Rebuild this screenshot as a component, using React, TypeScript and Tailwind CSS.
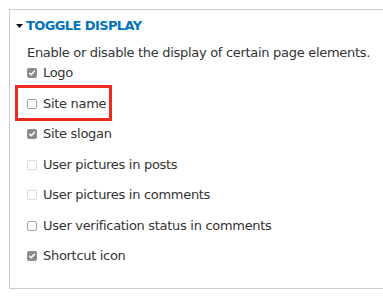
import React from 'react';

// Display toggles shown in the fieldset
const toggles = [
  { id: 'logo', label: 'Logo', checked: true },
  { id: 'name', label: 'Site name', checked: false, highlight: true },
  { id: 'slogan', label: 'Site slogan', checked: true },
  { id: 'posts', label: 'User pictures in posts', checked: false, disabled: true },
  { id: 'comments', label: 'User pictures in comments', checked: false, disabled: true },
  { id: 'verify', label: 'User verification status in comments', checked: false },
  { id: 'shortcut', label: 'Shortcut icon', checked: true },
];

type Toggle = (typeof toggles)[number] & { highlight?: boolean; disabled?: boolean };

const Box = ({ checked, disabled }: { checked: boolean; disabled?: boolean }) => {
  if (checked) {
    return (
      <span className="flex h-[10px] w-[10px] items-center justify-center rounded-[2px] bg-[#8c8c8c]">
        <svg width="8" height="8" viewBox="0 0 8 8">
          <path d="M1.6 4.2 L3.2 5.8 L6.4 2.2" fill="none" stroke="#fff" strokeWidth="1.4" strokeLinecap="round" strokeLinejoin="round" />
        </svg>
      </span>
    );
  }
  return (
    <span
      className={
        disabled
          ? 'block h-[10px] w-[10px] rounded-[2px] border border-[#dcdcdc] bg-white'
          : 'block h-[10px] w-[10px] rounded-[2px] border border-[#a5a5a5] bg-white'
      }
    />
  );
};

const Row = ({ item, first }: { item: Toggle; first: boolean }) => (
  <div className={first ? 'relative flex h-[18px] items-center' : 'relative mt-[12.5px] flex h-[18px] items-center'}>
    <Box checked={item.checked} disabled={item.disabled} />
    <span className="ml-[6px] whitespace-nowrap">{item.label}</span>
    {item.highlight && (
      <span className="absolute left-[-12px] top-[-9.5px] h-[36px] w-[97px] border-[3px] border-[#ec2a21]" />
    )}
  </div>
);

export default function App() {
  return (
    <div
      className="h-[299px] w-[383px] overflow-hidden bg-white pl-[9px] pt-[9px] text-[13px] tracking-[-0.3px] text-[#333]"
      style={{ fontFamily: '"DejaVu Sans", Verdana, sans-serif' }}
    >
      <div className="h-[280px] w-[420px] border border-[#cccccc]">
        <div className="flex h-[32px] items-center pl-[6px]">
          <svg width="7" height="4" viewBox="0 0 7 4" className="mr-[3px]">
            <path d="M0 0 L7 0 L3.5 4 Z" fill="#111" />
          </svg>
          <span className="font-bold uppercase tracking-[-0.6px] text-[#0074bd]">Toggle display</span>
        </div>
        <div className="pl-[17px]">
          <div className="flex h-[22px] items-center whitespace-nowrap">
            Enable or disable the display of certain page elements.
          </div>
          {toggles.map((t, i) => (
            <Row key={t.id} item={t as Toggle} first={i === 0} />
          ))}
        </div>
      </div>
    </div>
  );
}
